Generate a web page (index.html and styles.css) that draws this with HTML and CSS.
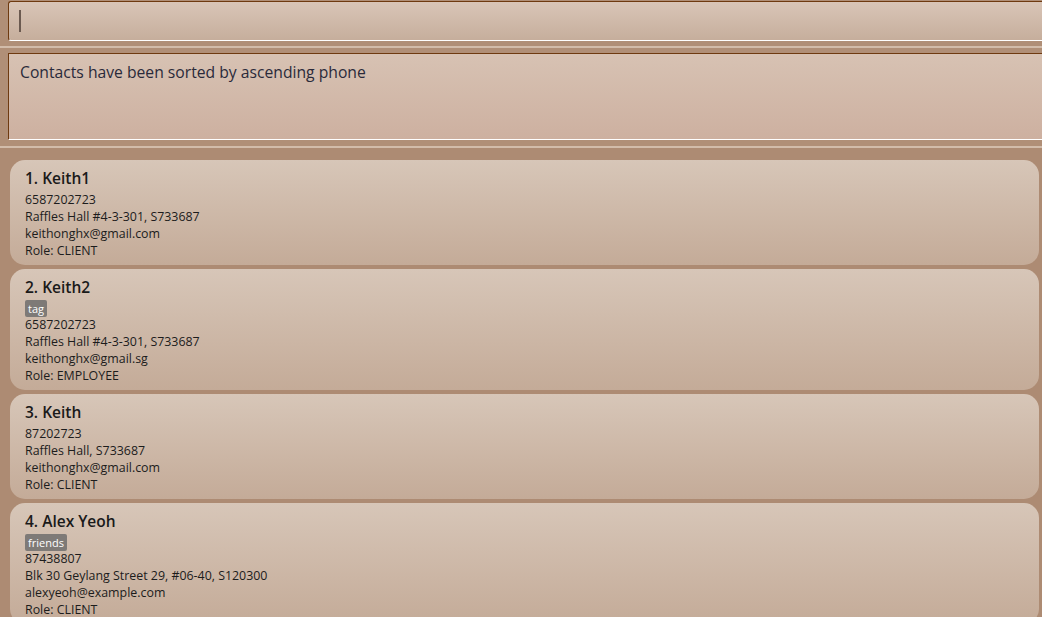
FILE: index.html
```html
<!DOCTYPE html>
<html>
<head>
<meta charset="utf-8">
<link rel="stylesheet" href="styles.css">
</head>
<body>
<div class="app">
  <div class="command"><span class="caret"></span></div>
  <div class="divider top-divider"><div class="line"></div></div>
  <div class="result">Contacts have been sorted by ascending phone</div>
  <div class="divider bottom-divider"><div class="line"></div></div>
  <div class="list">
    <div class="card">
      <div class="name">1. Keith1</div>
      <div class="field">6587202723</div>
      <div class="field">Raffles Hall #4-3-301, S733687</div>
      <div class="field">keithonghx@gmail.com</div>
      <div class="field">Role: CLIENT</div>
    </div>
    <div class="card">
      <div class="name">2. Keith2</div>
      <div class="tags"><span class="tag">tag</span></div>
      <div class="field">6587202723</div>
      <div class="field">Raffles Hall #4-3-301, S733687</div>
      <div class="field">keithonghx@gmail.sg</div>
      <div class="field">Role: EMPLOYEE</div>
    </div>
    <div class="card">
      <div class="name">3. Keith</div>
      <div class="field">87202723</div>
      <div class="field">Raffles Hall, S733687</div>
      <div class="field">keithonghx@gmail.com</div>
      <div class="field">Role: CLIENT</div>
    </div>
    <div class="card">
      <div class="name">4. Alex Yeoh</div>
      <div class="tags"><span class="tag">friends</span></div>
      <div class="field">87438807</div>
      <div class="field">Blk 30 Geylang Street 29, #06-40, S120300</div>
      <div class="field">alexyeoh@example.com</div>
      <div class="field">Role: CLIENT</div>
    </div>
  </div>
</div>
</body>
</html>
```
FILE: styles.css
```css
html, body {
  margin: 0;
  padding: 0;
  height: 617px;
  overflow: hidden;
  background: #ae8c74;
}
body {
  font-family: "Open Sans", "Noto Sans", sans-serif;
  color: #1e1e1e;
}
.app {
  display: flex;
  flex-direction: column;
  height: 617px;
  background: #b08f77;
}
.command {
  box-sizing: border-box;
  margin: 1px 0 0 8px;
  height: 40px;
  border-top: 1px solid #6e3a10;
  border-left: 1px solid #6e3a10;
  border-bottom: 1px solid #ffffff;
  border-radius: 3px 0 0 3px;
  background: linear-gradient(#d9c5b7, #c6ae9c);
  display: flex;
  align-items: center;
  padding-left: 10px;
}
.caret {
  width: 2px;
  height: 22px;
  background: #6b5a50;
  margin-top: -1px;
}
.divider {
  display: flex;
  flex-direction: column;
}
.top-divider {
  padding: 5px 0;
}
.bottom-divider {
  padding: 6px 0 12px;
  background: linear-gradient(#b08f77 0 8px, #ad8b73 8px);
}
.line {
  height: 2px;
  background: #d2bcaa;
}
.result {
  box-sizing: border-box;
  margin-left: 8px;
  height: 87px;
  border-top: 1px solid #6e3a10;
  border-left: 1px solid #6e3a10;
  border-bottom: 1px solid #ffffff;
  background: linear-gradient(#d7c2b3, #cdb0a0);
  padding: 7px 11px;
  font-size: 15.7px;
  line-height: 22px;
  color: #2a2a3a;
}
.list {
  flex: 1;
  overflow: hidden;
  background: #ad8b73;
  padding: 0 3px 5px 10px;
  display: flex;
  flex-direction: column;
  gap: 4px;
  min-height: 0;
}
.card {
  flex: none;
  border-radius: 15px;
  background: linear-gradient(#d7c6b8, #c4ab98);
  padding: 8px 15px 6px;
}
.name {
  font-weight: 600;
  font-size: 15.5px;
  line-height: 20px;
  margin-bottom: 3px;
  color: #1a1a1a;
}
.field {
  font-size: 12.4px;
  line-height: 17px;
  color: #1c1c1c;
}
.tags {
  display: flex;
  height: 16px;
  align-items: flex-start;
}
.tag {
  background: #7e7a77;
  color: #ffffff;
  font-size: 11px;
  line-height: 17px;
  padding: 0 3px;
  border-radius: 2px;
}
```
